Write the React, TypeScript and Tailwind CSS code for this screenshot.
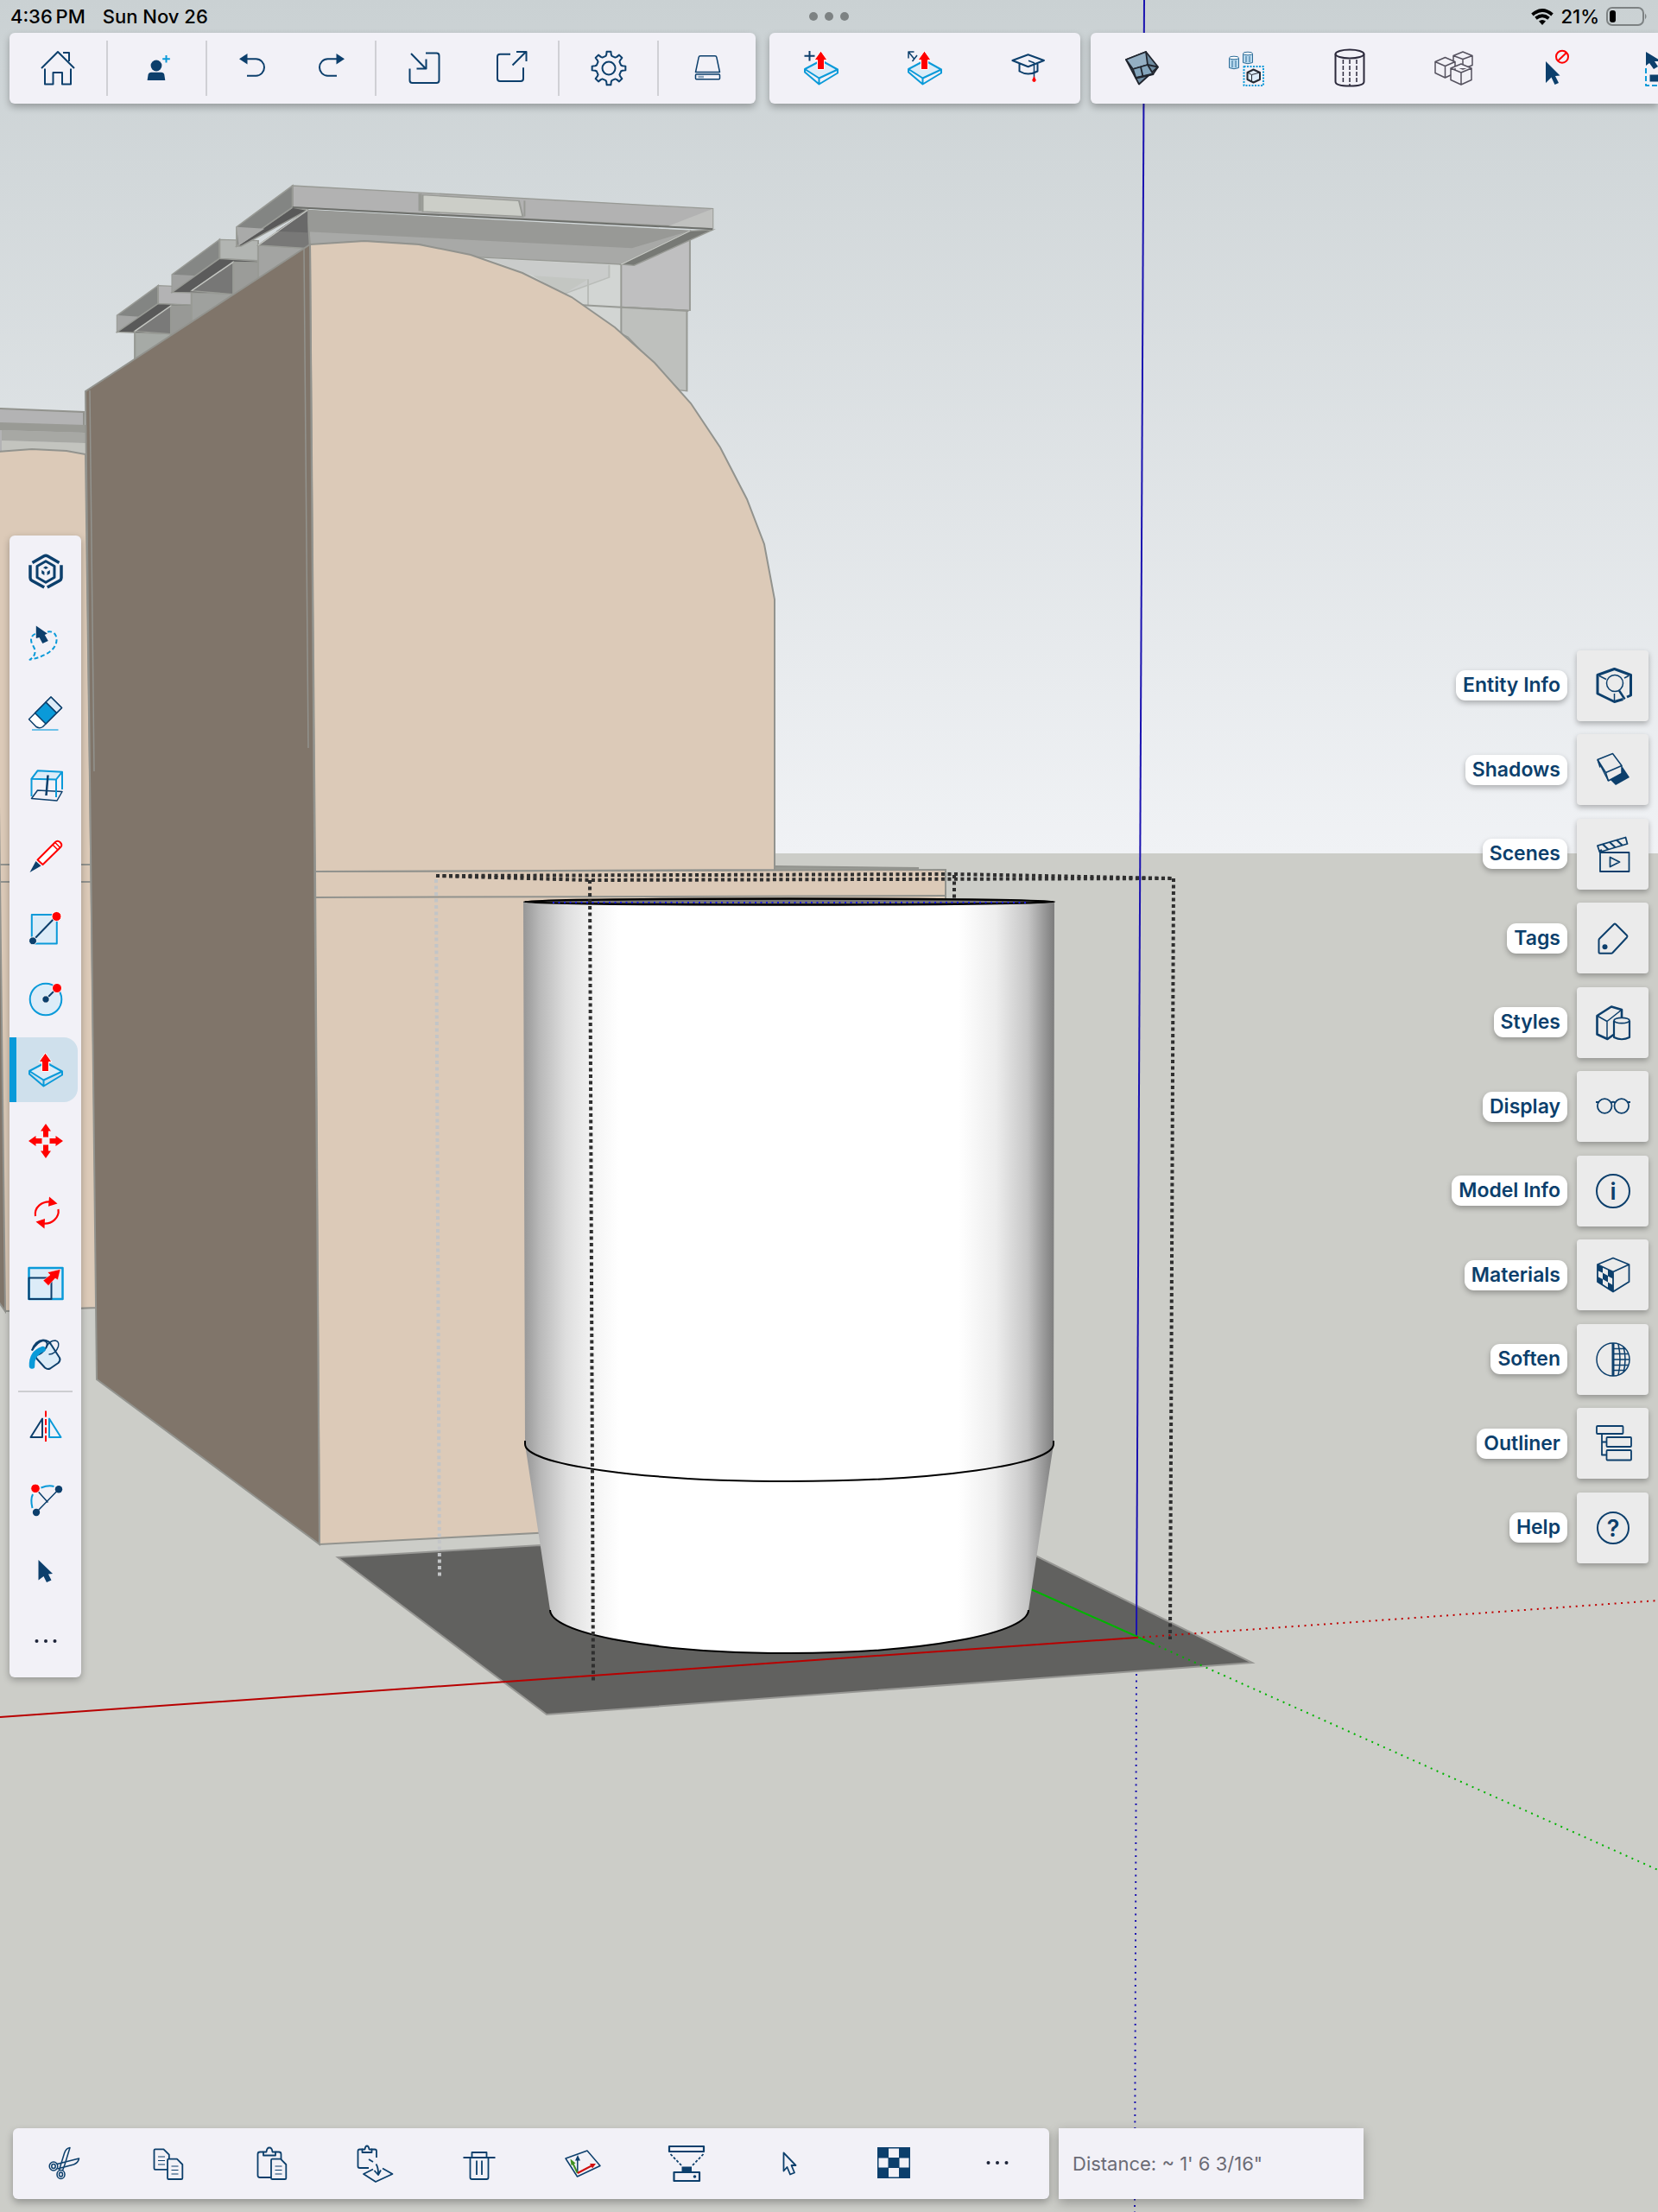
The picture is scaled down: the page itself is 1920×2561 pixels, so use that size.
import { useState } from 'react';
import type { ReactNode } from 'react';

const NAVY = '#0c3f6c';
const BLUE = '#0a9ad9';
const PALE = '#dcecf8';
const RED = '#ff0000';

function Icon({ children, w = 2 }: { children: ReactNode; w?: number }) {
  return (
    <svg
      viewBox="0 0 40 40"
      className="size-10 shrink-0 overflow-visible"
      fill="none"
      stroke={NAVY}
      strokeWidth={w}
      strokeLinejoin="round"
      aria-hidden="true"
    >
      {children}
    </svg>
  );
}

function gearPath() {
  const pts: string[] = [];
  for (let i = 0; i < 8; i++) {
    const mid = i * 45 - 90;
    const steps = [
      [-14, 14.5],
      [-10, 16],
      [-7, 19.5],
      [7, 19.5],
      [10, 16],
      [14, 14.5],
    ];
    for (const [d, r] of steps) {
      const a = ((mid + d) * Math.PI) / 180;
      pts.push(`${(20 + r * Math.cos(a)).toFixed(2)} ${(20 + r * Math.sin(a)).toFixed(2)}`);
    }
  }
  return `M${pts.join('L')}Z`;
}

const Slab = () => (
  <>
    <path d="M1 21L20 11 39 21.5 17.5 31.5Z" fill={PALE} stroke={BLUE} />
    <path d="M1 21v3.5l16.5 14L39 25.5v-4M17.5 31.5v7" stroke={BLUE} />
    <path d="M19.5 0L27 10.5H23.5V21.5H15.5V10.5H12z" fill={RED} stroke="#fff" strokeWidth="1" />
  </>
);

const HomeIcon = () => (
  <Icon>
    <path d="M1 20L20 1 39 20M26 2h7v10M5 20.5V38.5H14.5V25H25V38.5H35V20.5" />
  </Icon>
);

const UserIcon = () => (
  <Icon>
    <circle cx="19" cy="17" r="6.4" fill={NAVY} stroke="none" />
    <path d="M8.6 34l1-6.5q.6-2.8 3.6-2.8h11.5q3 0 3.6 2.8l1 6.5z" fill={NAVY} stroke="none" />
    <path d="M30.5 5v8.5M26.2 9.3h8.6" stroke={BLUE} />
  </Icon>
);

const UndoIcon = () => (
  <Icon>
    <path d="M6 9.3L15.5 3V15.5z" fill={NAVY} stroke="none" />
    <path d="M15 9.3h10.5a9.5 9.7 0 0 1 0 19.4H15" />
  </Icon>
);

const RedoIcon = () => (
  <Icon>
    <path d="M35 9.3L25.5 3V15.5z" fill={NAVY} stroke="none" />
    <path d="M26 9.3H15.5a9.5 9.7 0 0 0 0 19.4H26" />
  </Icon>
);

const ImportIcon = () => (
  <Icon>
    <path d="M22 2.5H34.5a3 3 0 0 1 3 3V34a3 3 0 0 1-3 3H6.5a3 3 0 0 1-3-3V20.5M5 3L22 20.5M22.5 9.5v11H11.5" />
  </Icon>
);

const ExportIcon = () => (
  <Icon>
    <path d="M19 3.7H7a3 3 0 0 0-3 3V32a3 3 0 0 0 3 3H31a3 3 0 0 0 3-3V19.3M21.5 16.5L37 1M26 1H37.5V12" />
  </Icon>
);

const GearIcon = () => (
  <Icon>
    <path d={gearPath()} />
    <circle cx="20" cy="20" r="7.5" />
  </Icon>
);

const DriveIcon = () => (
  <Icon w={1.5}>
    <path d="M12 5.7H29q1.5 0 1.8 1.5L34.5 24.5H6.5L10.2 7.2q.3-1.5 1.8-1.5z" />
    <rect x="6.5" y="27" width="28" height="5.8" rx="1" />
    <path d="M9.5 30h6.5" stroke="#8aa3bb" strokeWidth="2.5" />
  </Icon>
);

const PushPullIcon = () => (
  <Icon>
    <Slab />
  </Icon>
);

const PushPullAddIcon = () => (
  <Icon>
    <Slab />
    <path d="M6.5 0v11.5M.5 5.7h12" />
  </Icon>
);

const PushPullStretchIcon = () => (
  <Icon>
    <Slab />
    <path d="M1 8.5V1h6.5M1 1l6.5 8M5.5 12l5.5-7" strokeWidth="1.5" />
  </Icon>
);

const LearnIcon = () => (
  <Icon>
    <path d="M1.4 11L19.6 4.3 38 11 19.6 18.3ZM9.5 15v8.5q10 6 21 0V15" />
    <path d="M20 11.3l6.5 2.5V31" strokeWidth="1.5" />
    <path d="M26.5 29l2.2 4.5a2.2 2.4 0 0 1-4.4 0z" fill={RED} stroke="none" />
  </Icon>
);

const ShadedBoxIcon = () => (
  <Icon w={1.8}>
    <g stroke="#20252e">
      <path d="M1 10L24 1 38 18.5 16 38.5Z" fill="#6f8ca1" />
      <path d="M1 10L24 1l2 15L9 21z" fill="#94afc3" />
      <path d="M9 21l17-5 6.5 11-20 4.5z" fill="#84a5bc" />
      <path d="M26 16l12 2.5M12.5 31L32.5 26.5 38 18.5M18 18.5l2.5 11" />
    </g>
  </Icon>
);

const InstancesIcon = () => (
  <Icon w={1.5}>
    <g stroke="#2d6c98" fill="#b8d9ee" strokeWidth="1">
      <path d="M.5 8v11.5q5.5 2.5 11 0V8" />
      <ellipse cx="6" cy="8" rx="5.5" ry="1.8" fill="#fff" />
      <path d="M16.5 3v10.5q5.5 2.5 11 0V3" />
      <ellipse cx="22" cy="3" rx="5.5" ry="1.8" fill="#fff" />
      <path d="M4 11v8M8 11v8M20 6v7M24 6v7" />
    </g>
    <rect x="17.5" y="18" width="22.5" height="22" stroke={BLUE} strokeWidth="2" strokeDasharray="2 1.5" />
    <path d="M28.5 21.5l7.5 3.5v8l-7.5 3.5L21.5 33v-8z" fill={PALE} stroke="#252a33" strokeWidth="2" />
    <path d="M21.5 25l5 2.5 9.5-2.5M26.5 27.5V36" stroke="#252a33" strokeWidth="1" />
  </Icon>
);

const CylinderIcon = () => (
  <Icon>
    <g stroke="#2c2a3c">
      <ellipse cx="20" cy="3.5" rx="16.5" ry="5" />
      <path d="M3.5 3.5V35.5q0 5 16.5 5t16.5-5V3.5" />
      <path d="M12.4 10V38M20 10V40M28 10V38" strokeWidth="1.5" strokeDasharray="5 2" />
    </g>
  </Icon>
);

const CubesIcon = () => (
  <Icon w={1.5}>
    <g stroke="#55525f" fill="#f2f1f7">
      <path d="M31 1l11 4.5v11L31 21 20 16.5v-11zM20 5.5L31 9.5 42 5.5M31 9.5V21" />
      <path d="M10.5 7.5l11.5 5v13L10.5 31-1 25.5v-13zM-1 12.5l11.5 5 11.5-5M10.5 17.5V31" />
      <path d="M29 15l12 5v13.5L29 39l-12-5.5V20zM17 20l12 5 12-5M29 25V39" />
    </g>
  </Icon>
);

const DeselectIcon = () => (
  <Icon>
    <path d="M7 12L23.5 28.5 18 29l4 8-4.5 2-4-8.5L7 37z" fill={NAVY} stroke="none" />
    <circle cx="26" cy="6.7" r="7" stroke={RED} />
    <path d="M21 11.5L31 2" stroke={RED} />
  </Icon>
);

const SelectInnerIcon = () => (
  <Icon>
    <path d="M3 1v16l4-3 5 7 5-3-4-6h8z" fill={NAVY} stroke="none" />
    <path d="M3 20v20h30" stroke={BLUE} strokeDasharray="6 3" />
    <rect x="7.5" y="27.5" width="16" height="8" fill={NAVY} stroke="none" />
  </Icon>
);

const LogoIcon = () => (
  <Icon w={3.5}>
    <path d="M4.5 10.5L17.5 3q2.5-1.4 5 0L35.5 10.5M2 13.3V28q0 2 2 3.2L18.2 39M38 13.3V28q0 2-2 3.2L21.8 39" />
    <path d="M20 8.8l10 5.7v13L20 33.2 10 27.5v-13z" strokeWidth="3" />
    <path d="M20 14.5l3 1.7-3 1.7-3-1.7zM15.2 19l3.2 2v4l-3.2-2zM24.8 19l-3.2 2v4l3.2-2z" fill={NAVY} stroke="none" />
  </Icon>
);

const LassoIcon = () => (
  <Icon>
    <path d="M22 7.5C29 6 33 11 32.5 17.5 32 28 20 36 1.5 39.8 9 35 8.5 29 5.5 24 1 17 3 11 9 9.5" stroke={BLUE} strokeDasharray="5 3" />
    <path d="M8.8 .5L21.8 9.5l-3 1.5 4 7-6.5 3-3.8-7-3.7 1z" fill={NAVY} stroke="none" />
  </Icon>
);

const EraserIcon = () => (
  <Icon w={1.5}>
    <path d="M26 1L38.5 13.5 16.5 35.5q-3.5 2.5-7.5 0L.5 26.7z" fill="#fff" />
    <path d="M26 1L38.5 13.5 32.5 19.5 20 7z" fill={PALE} />
    <path d="M20 7L32.5 19.5 20 32 7.5 19.5z" fill={BLUE} />
    <path d="M4 39H34.5" stroke="#3fb1e3" />
  </Icon>
);

const SectionIcon = () => (
  <Icon>
    <path d="M3.5 35.5L10.5 26 39 27.5 33 38z" strokeWidth="1.5" />
    <path d="M3.5 12.7L10.5 3.3 39 4.7 32 13.5z" fill={PALE} stroke={BLUE} />
    <path d="M3.5 12.7V33M32 13.5V34M39 4.7V25" stroke={BLUE} />
    <path d="M22.5 8.5L20.5 32" strokeWidth="2.5" />
  </Icon>
);

const PencilIcon = () => (
  <Icon>
    <path d="M1.5 39L8.5 26l6 5.5z" fill={NAVY} stroke="none" />
    <path d="M10.5 24.5L31 4q2.5-2.5 5.5 0 3 3 1 5.5L16.5 30z" fill="#fff" stroke={RED} />
    <path d="M28 7l6 6M30.8 4.5l6 6" stroke={RED} strokeWidth="1.5" />
  </Icon>
);

const RectIcon = () => (
  <Icon>
    <rect x="3.8" y="5" width="29" height="33.5" fill={PALE} stroke={BLUE} />
    <path d="M5 35L32 7" />
    <circle cx="32.5" cy="7" r="5.5" fill={RED} stroke="#fff" strokeWidth="1" />
    <circle cx="5" cy="35.3" r="4.5" fill={NAVY} stroke="#fff" strokeWidth="1" />
  </Icon>
);

const CircleIcon = () => (
  <Icon>
    <circle cx="20" cy="21" r="18.3" fill={PALE} stroke={BLUE} />
    <path d="M20 21L32 9" />
    <circle cx="20" cy="21" r="4.2" fill={NAVY} stroke="#fff" strokeWidth="1" />
    <circle cx="33" cy="8" r="5.5" fill={RED} stroke="#fff" strokeWidth="1" />
  </Icon>
);

const MoveIcon = () => (
  <Icon>
    <g fill={RED} stroke="none">
      {[0, 90, 180, 270].map((deg) => (
        <path key={deg} d="M20 0l6 8.5h-3V15.5H17V8.5h-3z" transform={`rotate(${deg} 20 20)`} />
      ))}
    </g>
  </Icon>
);

const RotateIcon = () => (
  <Icon w={2.2}>
    <g stroke={RED}>
      <path d="M8 24C6.5 14 15 6.5 26 7.5" />
      <path d="M34.5 16C36 26 27 33.5 17 32.5" />
      <path d="M24 1.5L33.5 9.5 23 12.8zM18.5 38.5L8.5 30.5 19 27z" fill={RED} stroke="none" />
    </g>
  </Icon>
);

const ScaleIcon = () => (
  <Icon>
    <rect x=".5" y="2" width="39" height="36" fill={PALE} stroke={BLUE} strokeWidth="2.5" />
    <path d="M.5 13.5H26.5V38H.5z" />
    <path d="M37 3.5L34 16l-3-2-8 8.5-6-6 8-6.5-3-3z" fill={RED} stroke="#fff" strokeWidth=".5" />
  </Icon>
);

const PaintIcon = () => (
  <Icon>
    <path d="M7.5 22L26 4.5 36.5 24q.5 2-1.5 4.5L25 35.5q-3 1.5-6-1z" fill={PALE} stroke="none" />
    <path d="M9.5 20q-2 2 0 4L19 34.5q3 2.5 6 1L34.5 29q3-3 1.5-6L26 7.5Q24 3 17 2.5 8 3 4 14.5" />
    <path d="M4 14.5q6-10 13-11.5 7 1 3.5 8Q16 18.5 9.5 20" />
    <path d="M20.5 11Q24 3 31 3q5 1 3.5 7-3 9-11 9" strokeWidth="1.5" />
    <path d="M4 32.5Q3.5 17.5 16.5 13" stroke={BLUE} strokeWidth="6.5" strokeLinecap="round" />
  </Icon>
);

const FlipIcon = () => (
  <Icon>
    <path d="M2.5 31L16 9.5V31z" />
    <path d="M37.5 31L24 9.5V31z" stroke={BLUE} />
    <path d="M20 .5V36" stroke={RED} strokeDasharray="7 2.5" />
  </Icon>
);

const ArcIcon = () => (
  <Icon>
    <path d="M14.5 6.5q9-3.5 15-1.5M5 14q-3 6-.5 16" stroke={BLUE} />
    <path d="M8 7.3L22.5 23.5M35 8.2L9 35" strokeWidth="1.5" />
    <circle cx="8" cy="7.3" r="5.3" fill={RED} stroke="#fff" strokeWidth="1" />
    <circle cx="35" cy="8.2" r="4.2" fill={NAVY} stroke="none" />
    <circle cx="9" cy="35" r="4.2" fill={NAVY} stroke="none" />
  </Icon>
);

const CursorIcon = () => (
  <Icon>
    <path d="M11.5 8L28 24l-5 .5 3.5 7L21 34l-3.5-7-6 4.5z" fill={NAVY} stroke="none" />
  </Icon>
);

const DotsIcon = () => (
  <Icon>
    <g fill="#1d2438" stroke="none">
      <circle cx="9.5" cy="19" r="2" />
      <circle cx="20" cy="19" r="2" />
      <circle cx="30.5" cy="19" r="2" />
    </g>
  </Icon>
);

const EntityIcon = () => (
  <Icon>
    <path d="M31.5 35.5L21.5 38.5 2 29V7.5L21.5 .5 40.5 7.5V31l-4.5 2" strokeWidth="3" />
    <circle cx="22" cy="17" r="9.5" fill="#ebebeb" strokeWidth="1.5" />
    <path d="M27 25.5L33.5 35.5" strokeWidth="2.5" />
    <path d="M4 8.5l8 4M38 8.5l-5 2.5M21.5 29v8" strokeWidth="1.5" />
  </Icon>
);

const ShadowsIcon = () => (
  <Icon w={1.5}>
    <path d="M16 31L23 38 39 29 31 17z" fill={NAVY} stroke="none" />
    <path d="M2 8.5L19.5 1.5 30 15.5V24.5L14.5 33z" fill="#ebebeb" />
    <path d="M2 8.5l9.5 15L30 15.5M11.5 23.5l3 9.5M2 8.5l3 9" />
  </Icon>
);

const ScenesIcon = () => (
  <Icon w={1.8}>
    <path d="M2 10.2L34.5 .5 36.5 8 4.5 17.5z" />
    <path d="M8 8.5l6.5 6M16 6l6.5 6M24 3.5l6.5 6M4 17l3-2" strokeWidth="2.2" />
    <path d="M5 18H38.5V40H5zM16.5 23.5L27.5 29 16.5 34.5z" />
  </Icon>
);

const TagsIcon = () => (
  <Icon>
    <path d="M21 4q1-1 2 0L36 17q1 1 0 2.2L19.5 37q-.7.7-1.5.7H5q-1.5 0-1.5-1.5V22.5q0-1 .7-1.7z" />
    <circle cx="10.5" cy="30.2" r="3" fill={NAVY} stroke="none" />
  </Icon>
);

const StylesIcon = () => (
  <Icon w={2.6}>
    <path d="M20.5 34L13.5 39 1.5 33.5V12L18 1.5 30 5V15" />
    <path d="M1.5 12l11.5 6.5L30 5M13 18.5V38" strokeWidth="1.5" />
    <path d="M21 18V37q9 4.5 18 0V18" fill="#ebebeb" strokeWidth="2.2" />
    <ellipse cx="30" cy="17.5" rx="9" ry="3.2" fill="#ebebeb" strokeWidth="1.8" />
  </Icon>
);

const DisplayIcon = () => (
  <Icon w={1.8}>
    <circle cx="10.2" cy="19.5" r="8.3" />
    <circle cx="29.8" cy="19.5" r="8.3" />
    <path d="M0 15h3.5M36.5 15H40M17.5 15.5q2.5-1.5 5 0" />
  </Icon>
);

const IconLetter = ({ children }: { children: string }) => (
  <text x="20" y="30" textAnchor="middle" fontFamily="Inter, sans-serif" fontSize="27" fontWeight="600" fill={NAVY} stroke="none">
    {children}
  </text>
);

const InfoIcon = () => (
  <Icon>
    <circle cx="20" cy="20" r="19" />
    <IconLetter>i</IconLetter>
  </Icon>
);

const HelpIcon = () => (
  <Icon>
    <circle cx="20" cy="20" r="18" />
    <IconLetter>?</IconLetter>
  </Icon>
);

const MaterialsIcon = () => (
  <Icon w={1.8}>
    <path
      d="M2 8l6 2.8v7L2 15zM14 13.7l6 2.8v8l-6-3zM8 17.8l6 3.2v7.5l-6-3.5zM2 22l6 3v7l-6-3.5zM14 28.5l6 3.5v8l-6-3.8z"
      fill={NAVY}
      stroke="none"
    />
    <path d="M20 .5L38.5 8V28L20 39.5 2 28V8zM2 8l18 8.5L38.5 8M20 16.5v23" />
  </Icon>
);

const SoftenIcon = () => (
  <Icon w={1.5}>
    <circle cx="20" cy="20" r="19" />
    <path d="M20 1V39" strokeWidth="3" />
    <path d="M26 2q4 18 0 36M32 5q4 15 0 30M20 7.5H34M20 13.5H38M20 20H39M20 26.5H38M20 32.5H34" />
  </Icon>
);

const OutlinerIcon = () => (
  <Icon w={1.8}>
    <rect x="1" y="0" width="30.5" height="9" rx="1" />
    <rect x="12.5" y="13" width="28.5" height="11" rx="1" />
    <rect x="12.5" y="28" width="28.5" height="11.5" rx="1" />
    <path d="M7 9V33.5h5.5M7 18.5h5.5" />
  </Icon>
);

const CutIcon = () => (
  <Icon w={1.5}>
    <ellipse cx="7" cy="23" rx="4.8" ry="5" />
    <ellipse cx="15.5" cy="32.5" rx="4.5" ry="5" />
    <ellipse cx="7" cy="23" rx="2.2" ry="2.5" />
    <ellipse cx="15.5" cy="32.5" rx="2" ry="2.5" />
    <path d="M11 20.5L36.5 14q-1 5-6 7L11.5 26M13.5 27.5L19.5 8q2-6 6.5-6.5L20 21 17.5 28" />
  </Icon>
);

const Sheet = () => (
  <>
    <path d="M19 16q0-1.3 1.3-1.3H30l6.3 6.3V36.7q0 1.3-1.3 1.3H20.3Q19 38 19 36.7z" fill="#f2f1f7" />
    <path d="M23.5 23h8M23.5 27.5h8M23.5 32h8" strokeWidth="1.2" />
  </>
);

const CopyIcon = () => (
  <Icon w={1.8}>
    <path d="M3.5 4.6q0-1.3 1.3-1.3H14.5l6.3 6.3V25.5q0 1.3-1.3 1.3H4.8q-1.3 0-1.3-1.3z" />
    <path d="M8 12h8M8 16.5h8M8 21h8" strokeWidth="1.2" />
    <Sheet />
  </Icon>
);

const PasteIcon = () => (
  <Icon w={1.8}>
    <path d="M10 6.5H6q-2.5 0-2.5 2.5V33.5Q3.5 36 6 36H28q2.5 0 2.5-2.5V9q0-2.5-2.5-2.5H24" />
    <path d="M10 10.5V6.5h3.5q.5-5 3.5-5t3.5 5H24v4z" />
    <Sheet />
  </Icon>
);

const PasteInPlaceIcon = () => (
  <Icon w={1.8}>
    <path d="M5 3.5H1.5Q-.5 3.5-.5 5.5V23q0 2 2 2H12M15 3.5h4q2 0 2 2V13" />
    <path d="M4.5 7V3.5H7.5Q8-.5 10-.5t2.5 4h3V7z" />
    <path d="M17 26.5L6 32 20 41 39.5 32 28 25.5" />
    <path d="M12 15l5 3M20.5 20.5q2.5 3.5 2.5 11M18.5 28l4.5 5 3-5.5" />
  </Icon>
);

const TrashIcon = () => (
  <Icon w={1.8}>
    <path d="M1.5 13H38.5M11.5 13V7H28.5V13M9.5 13V36q0 2 2 2H28.5q2 0 2-2V13M17 16.5V33M23 16.5V33" />
  </Icon>
);

const AxesIcon = () => (
  <Icon w={1.5}>
    <path d="M0 14L25 5 40 22.5 13.5 35z" />
    <path d="M13.8 31V15" />
    <path d="M14 10l3 6.5H11z" fill={NAVY} stroke="none" />
    <path d="M13.8 31L8 19" stroke="#3f8f1f" strokeWidth="2" />
    <path d="M5.5 14.5l6 5-5 2.5z" fill="#3f8f1f" stroke="none" />
    <path d="M13.8 31L30 22.5" stroke="#d00f0f" strokeWidth="2" />
    <path d="M35 20l-4 5.5-3-5.5z" fill="#d00f0f" stroke="none" />
  </Icon>
);

const ProjectorIcon = () => (
  <Icon w={2.2}>
    <rect x="0" y="0" width="40" height="6" />
    <path d="M1.5 9L15 23M39.5 9L26 23" strokeWidth="1.8" strokeDasharray="3 2" />
    <rect x="14.5" y="23.5" width="11.5" height="6.5" fill={NAVY} stroke="none" />
    <rect x="5.5" y="30" width="29.5" height="10" />
    <circle cx="29.5" cy="35" r="1.8" fill={NAVY} stroke="none" />
  </Icon>
);

const PointerIcon = () => (
  <Icon w={1.8}>
    <path d="M12.5 7.5L26.5 22h-5l3.5 8.5-5 2-3.5-8.5-4 4.5z" />
  </Icon>
);

const CheckerIcon = () => (
  <Icon>
    <rect x="1" y="1" width="38" height="36" fill={NAVY} stroke="none" />
    <path d="M14 2.5H26V13H14zM2.5 13.5H13.5V24.5H2.5zM26.5 13.5H37.5V24.5H26.5zM14 25H26V35.5H14z" fill="#f2f1f7" stroke="none" />
  </Icon>
);

type Tool = { name: string; icon: () => ReactNode };

const fileGroups: { width: string; tools: Tool[] }[] = [
  { width: 'w-[104px]', tools: [{ name: 'Home', icon: HomeIcon }] },
  { width: 'w-[105px]', tools: [{ name: 'Invite', icon: UserIcon }] },
  {
    width: 'w-[93px]',
    tools: [
      { name: 'Undo', icon: UndoIcon },
      { name: 'Redo', icon: RedoIcon },
    ],
  },
  {
    width: 'w-[101px]',
    tools: [
      { name: 'Import', icon: ImportIcon },
      { name: 'Export', icon: ExportIcon },
    ],
  },
  { width: 'w-[105px]', tools: [{ name: 'Settings', icon: GearIcon }] },
  { width: 'w-[104px]', tools: [{ name: 'Storage', icon: DriveIcon }] },
];

const modifiers: Tool[] = [
  { name: 'New face', icon: PushPullAddIcon },
  { name: 'Stretch', icon: PushPullStretchIcon },
  { name: 'Learn', icon: LearnIcon },
];

const actions: Tool[] = [
  { name: 'Shaded', icon: ShadedBoxIcon },
  { name: 'Instances', icon: InstancesIcon },
  { name: 'Hidden geometry', icon: CylinderIcon },
  { name: 'Components', icon: CubesIcon },
  { name: 'Deselect', icon: DeselectIcon },
  { name: 'Select inside', icon: SelectInnerIcon },
];

const drawTools: Tool[] = [
  { name: 'All tools', icon: LogoIcon },
  { name: 'Lasso', icon: LassoIcon },
  { name: 'Eraser', icon: EraserIcon },
  { name: 'Section', icon: SectionIcon },
  { name: 'Line', icon: PencilIcon },
  { name: 'Rectangle', icon: RectIcon },
  { name: 'Circle', icon: CircleIcon },
  { name: 'Push/Pull', icon: PushPullIcon },
  { name: 'Move', icon: MoveIcon },
  { name: 'Rotate', icon: RotateIcon },
  { name: 'Scale', icon: ScaleIcon },
  { name: 'Paint', icon: PaintIcon },
];

const extraTools: Tool[] = [
  { name: 'Flip', icon: FlipIcon },
  { name: 'Arc', icon: ArcIcon },
  { name: 'Select', icon: CursorIcon },
  { name: 'More tools', icon: DotsIcon },
];

const panels: Tool[] = [
  { name: 'Entity Info', icon: EntityIcon },
  { name: 'Shadows', icon: ShadowsIcon },
  { name: 'Scenes', icon: ScenesIcon },
  { name: 'Tags', icon: TagsIcon },
  { name: 'Styles', icon: StylesIcon },
  { name: 'Display', icon: DisplayIcon },
  { name: 'Model Info', icon: InfoIcon },
  { name: 'Materials', icon: MaterialsIcon },
  { name: 'Soften', icon: SoftenIcon },
  { name: 'Outliner', icon: OutlinerIcon },
  { name: 'Help', icon: HelpIcon },
];

const editTools: Tool[] = [
  { name: 'Cut', icon: CutIcon },
  { name: 'Copy', icon: CopyIcon },
  { name: 'Paste', icon: PasteIcon },
  { name: 'Paste in place', icon: PasteInPlaceIcon },
  { name: 'Delete', icon: TrashIcon },
  { name: 'Axes', icon: AxesIcon },
  { name: 'Project', icon: ProjectorIcon },
  { name: 'Pointer', icon: PointerIcon },
  { name: 'Texture', icon: CheckerIcon },
  { name: 'More actions', icon: DotsIcon },
];

function Scene() {
  return (
    <svg
      viewBox="0 0 1920 2561"
      preserveAspectRatio="xMidYMid slice"
      className="absolute inset-0 h-full w-full"
      aria-hidden="true"
    >
      <defs>
        <linearGradient id="sky" x1="0" y1="0" x2="0" y2="1">
          <stop offset="0" stopColor="#cad1d3" />
          <stop offset="1" stopColor="#f0f2f5" />
        </linearGradient>
        <linearGradient id="drum" x1="0" y1="0" x2="1" y2="0">
          <stop offset="0" stopColor="#969696" />
          <stop offset=".03" stopColor="#b8b8b8" />
          <stop offset=".08" stopColor="#dedede" />
          <stop offset=".14" stopColor="#f6f6f6" />
          <stop offset=".18" stopColor="#ffffff" />
          <stop offset=".82" stopColor="#ffffff" />
          <stop offset=".89" stopColor="#ededed" />
          <stop offset=".95" stopColor="#c6c6c6" />
          <stop offset="1" stopColor="#7c7c7c" />
        </linearGradient>
      </defs>

      <rect width="1920" height="988" fill="url(#sky)" />
      <rect y="988" width="1920" height="1573" fill="#cccdc8" />

      {/* neighbouring building */}
      <g stroke="#92938e" strokeWidth="2">
        <path d="M-2 473L97 477V490L99 530H-2z" fill="#b3b3b4" />
        <path d="M0 489L99 492V501L0 498z" fill="#999a95" stroke="none" />
        <path d="M2 498L99 501V513L2 510z" fill="#a7a8a4" stroke="none" />
        <path d="M2 510L99 513V530H2z" fill="#c3c4bf" stroke="none" />
        <path d="M-2 523L37 520 77 522 99 526 112 1514 7 1518-2 1505z" fill="#dccab8" />
        <path d="M-1 934L6 1518-1 1508z" fill="#80756a" />
        <path d="M0 1001H106M0 1021H106" />
      </g>

      {/* glass monitors along the roof, front one last */}
      <g transform="translate(90 190) scale(.4975 .3333)" stroke="#989a95" strokeWidth="4">
        <path d="M133 583L217 590V600L133 677z" fill="#a6aaa6" />
        <path d="M187 422L265 427V490L187 485z" fill="#b3b3b4" />
        <path d="M187 422L92 525V583L187 485z" fill="#838583" />
        <path d="M92 525L145 530 92 583z" fill="#a5a6a5" stroke="none" />
        <path d="M187 485L325 492 217 600V590L92 583z" fill="#595959" />
        <path d="M217 492H325L217 600z" fill="#989996" />
        <path d="M217 492L133 580 217 590z" fill="#7a7a79" />
        <path d="M133 580V677" fill="none" />

        <path d="M265 445L362 452 265 552z" fill="#9fa19e" />
        <path d="M330 262L420 266V335L330 328z" fill="#b2b5b2" />
        <path d="M330 262L220 383V445L330 328z" fill="#858785" />
        <path d="M220 383L278 388 220 445z" fill="#a0a1a0" stroke="none" />
        <path d="M330 328L480 343 362 455V450L220 445z" fill="#5b5b5b" />
        <path d="M362 340L478 343 362 457z" fill="#9b9c99" />
        <path d="M362 340L265 440 362 452z" fill="#777776" />

        <path d="M420 282L535 292 420 402z" fill="#a3a4a2" />
        <path d="M925 320L1267 348V600L1150 463z" fill="#d2d5d3" stroke="none" />
        <path d="M950 328L1237 350V393L1130 450 1060 388z" fill="#cacccb" stroke="none" />
        <path d="M1060 388L1188 400 1130 452z" fill="#c3c6c2" stroke="none" />
        <path d="M1237 350V393L1130 452M1188 400V490" fill="none" stroke="#b9bcb8" />
        <path d="M1265 348L1425 232V508L1265 496z" fill="#bfbfc0" />
        <path d="M1265 496L1418 508V788L1400 785 1280 600 1265 590z" fill="#bec0bd" />
        <path d="M1175 490L1422 510" strokeWidth="6" />

        <path d="M535 160L1425 232 1265 348 915 322 795 278 668 267 540 280z" fill="#a8a9a7" />
        <path d="M535 160L1425 232 1290 292 535 235z" fill="#989996" stroke="none" />
        <path d="M1425 232L1478 228 1295 352 1265 348z" fill="#777975" />
        <path d="M500 150L535 160 380 285H370z" fill="#595959" />
        <path d="M535 160L420 282 530 292 540 280z" fill="#787877" />
        <path d="M535 160L462 233 535 238z" fill="#696969" stroke="none" />

        <path d="M500 75L1478 155V222L500 150z" fill="#b2b2b2" />
        <path d="M1478 155V222L1375 215z" fill="#c0c1bf" stroke="none" />
        <path d="M803 107L1027 127 1036 182 803 165z" fill="#cccec8" />
        <path d="M1040 127V182" />
        <path d="M797 103V163" strokeWidth="8" />
        <path d="M500 75L370 218V285L500 150z" fill="#838583" />
        <path d="M370 218L435 224 375 283z" fill="#a9aaa9" stroke="none" />
        <path d="M500 150L1478 226" stroke="#6d6f6b" strokeWidth="6" />
        <path d="M1425 232L1265 348M535 160L420 282M362 340L265 440M217 492L133 580" stroke="#c6c8c4" strokeWidth="3" />
      </g>

      {/* vaulted building */}
      <g stroke="#92938e" strokeWidth="2">
        <path d="M897 1003L1063 1005V1008H897z" fill="#999b95" />
        <path d="M365 1009L1095 1007V1080L640 1774 370 1788z" fill="#dccab8" />
        <path d="M359 283L422 279 485 283 545 295 605 316 662 344 712 379 758 420 800 467 834 518 865 578 885 630 897 694V1007L365 1009z" fill="#dccab8" />
        <path d="M365 1039L1095 1037" />
        <path d="M359 283L99 453 112 1597 370 1788z" fill="#80756a" />
        <path d="M104 452L109 893M352 288L357 866" strokeWidth="1.5" />
      </g>

      {/* ground shadow */}
      <path d="M391 1803L633 1985 1450 1925 1199 1801 626 1789z" fill="#61615f" stroke="#979794" strokeWidth="2" />

      {/* bounding box edges behind the drum */}
      <g fill="none" stroke="#2f2f2f" strokeWidth="4" strokeDasharray="4 3.5">
        <path d="M505 1014L1105 1012 1359 1017" />
        <path d="M505 1014L683 1019 1359 1017" />
        <path d="M1105 1013V1042" />
        <path d="M505 1018L509 1825" stroke="#c3c5c7" />
      </g>

      {/* axes */}
      <g fill="none" strokeWidth="2">
        <path d="M1325 0L1316 1895" stroke="#1a12b0" />
        <path d="M1194 1840L1335 1903" stroke="#00b400" />
        <path d="M1316 1938L1314 2561" stroke="#1a12b0" strokeDasharray="2 5.5" />
        <path d="M1316 1896L1920 1853" stroke="#c00000" strokeDasharray="2 5.5" />
        <path d="M1335 1903L1920 2165" stroke="#00b400" strokeDasharray="2 5.5" />
      </g>

      {/* drum */}
      <path d="M608 1672L637 1864A277 50 0 0 0 1191 1864L1220 1672z" fill="url(#drum)" />
      <path d="M606 1044L608 1672A306 43 0 0 0 1220 1672L1221 1044z" fill="url(#drum)" />
      <path d="M608 1668V1672A306 43 0 0 0 1220 1672V1668M637 1864A277 50 0 0 0 1191 1864" fill="none" stroke="#000" strokeWidth="2" />
      <ellipse cx="914" cy="1044" rx="307" ry="3.5" fill="#777" stroke="#000" strokeWidth="2.5" />
      <path d="M640 1045H1190" stroke="#1a1ae0" strokeWidth="2" strokeDasharray="2 4.5" />
      <path d="M0 1988L1316 1896" stroke="#b80000" strokeWidth="2" />
      <g fill="none" stroke="#2f2f2f" strokeWidth="4" strokeDasharray="4 3.5">
        <path d="M683 1019L687 1946" />
        <path d="M1359 1017L1355 1898" />
      </g>
    </svg>
  );
}

function ToolButton({ tool, className }: { tool: Tool; className: string }) {
  const Glyph = tool.icon;
  return (
    <button type="button" aria-label={tool.name} className={`flex items-center justify-center ${className}`}>
      <Glyph />
    </button>
  );
}

function StatusBar() {
  return (
    <header className="grid h-[38px] grid-cols-3 items-center px-3 text-[22px] font-medium text-black">
      <div className="flex gap-5 whitespace-nowrap">
        <span>4:36{'\u2009'}PM</span>
        <span>Sun Nov 26</span>
      </div>
      <div className="flex justify-center gap-2">
        <span className="size-[10px] rounded-full bg-[#7d8283]" />
        <span className="size-[10px] rounded-full bg-[#7d8283]" />
        <span className="size-[10px] rounded-full bg-[#7d8283]" />
      </div>
      <div className="flex items-center justify-end gap-2">
        <svg viewBox="0 0 26 19" className="h-[19px] w-[26px]" fill="none" stroke="#000" strokeWidth="3.8" aria-hidden="true">
          <path d="M1.5 7Q13-3 24.5 7" />
          <path d="M5.5 11.3q7.5-6 15 0" />
          <path d="M13 19l-4-4.5q4-3 8 0z" fill="#000" stroke="none" />
        </svg>
        <span>21%</span>
        <svg viewBox="0 0 48 22" className="h-[22px] w-12" aria-hidden="true">
          <rect x="1" y="1" width="42" height="20" rx="6" fill="none" stroke="#7d8283" strokeWidth="2" />
          <rect x="4" y="4" width="7" height="14" rx="3" fill="#000" />
          <path d="M45 7.5q3 3.5 0 7z" fill="#7d8283" />
        </svg>
      </div>
    </header>
  );
}

export default function App() {
  const [activeTool, setActiveTool] = useState('Push/Pull');
  const [distance, setDistance] = useState(`Distance: ~ 1' 6 3/16"`);

  return (
    <div className="relative flex min-h-screen flex-col overflow-hidden bg-[#cccdc8] font-['Inter',sans-serif]">
      <Scene />

      <div className="relative flex flex-1 flex-col">
        <StatusBar />

        <div className="flex h-[82px] pl-[11px]">
          <div className="mr-4 flex shrink-0 items-center divide-x-2 divide-[#d0d0d5] rounded-md bg-[#f2f1f7] shadow-[0_4px_8px_rgba(0,0,0,0.28)]">
            {fileGroups.map((group) => (
              <div key={group.tools[0].name} className="flex h-16 items-center px-1">
                {group.tools.map((tool) => (
                  <ToolButton key={tool.name} tool={tool} className={group.width} />
                ))}
              </div>
            ))}
          </div>
          <div className="mr-3 flex shrink-0 rounded-md bg-[#f2f1f7] shadow-[0_4px_8px_rgba(0,0,0,0.28)]">
            {modifiers.map((tool) => (
              <ToolButton key={tool.name} tool={tool} className="w-[120px]" />
            ))}
          </div>
          <div className="min-w-0 flex-1 rounded-l-md bg-[#f2f1f7] shadow-[0_4px_8px_rgba(0,0,0,0.28)]">
            <div className="flex h-full overflow-hidden">
              {actions.map((tool) => (
                <ToolButton key={tool.name} tool={tool} className="w-[120px] shrink-0" />
              ))}
            </div>
          </div>
        </div>

        <main className="flex flex-1 items-center justify-between px-[11px] pb-[22px]">
          <nav className="flex min-h-[1322px] w-[83px] flex-col rounded-md bg-[#f2f1f7] shadow-[0_3px_8px_rgba(0,0,0,0.28)]">
            {drawTools.map((tool) => {
              const Glyph = tool.icon;
              const active = tool.name === activeTool;
              return (
                <button
                  key={tool.name}
                  type="button"
                  aria-label={tool.name}
                  aria-pressed={active}
                  onClick={() => setActiveTool(tool.name)}
                  className="flex shrink-0 grow basis-[75px] items-center"
                >
                  <span
                    className={
                      active
                        ? 'mr-1 flex h-[75px] flex-1 items-center justify-center rounded-r-2xl border-l-8 border-[#0a9ad9] bg-[#cfe0ec] pr-1'
                        : 'flex h-[75px] flex-1 items-center justify-center'
                    }
                  >
                    <Glyph />
                  </span>
                </button>
              );
            })}
            <hr className="mx-[10px] border-t-2 border-[#cdcdd1]" />
            {extraTools.map((tool) => (
              <ToolButton key={tool.name} tool={tool} className="shrink-0 grow basis-[75px]" />
            ))}
          </nav>

          <aside className="flex min-h-[1057px] flex-col items-end justify-between">
            {panels.map((panel) => {
              const Glyph = panel.icon;
              return (
                <button key={panel.name} type="button" className="flex items-center gap-[11px]">
                  <span className="rounded-[11px] bg-white px-2 text-[23px] leading-[35px] font-semibold text-[#0c3f6c] shadow-[0_3px_6px_rgba(0,0,0,0.28)]">
                    {panel.name}
                  </span>
                  <span className="flex h-[82px] w-[83px] items-center justify-center rounded bg-[#ebebeb] shadow-[0_3px_6px_rgba(0,0,0,0.28)]">
                    <Glyph />
                  </span>
                </button>
              );
            })}
          </aside>
        </main>

        <footer className="flex h-[82px] shrink-0 gap-[11px] pl-[15px]">
          <div className="flex rounded-md bg-[#f2f1f7] shadow-[0_4px_8px_rgba(0,0,0,0.28)]">
            {editTools.map((tool) => (
              <ToolButton key={tool.name} tool={tool} className="w-[120px]" />
            ))}
          </div>
          <input
            type="text"
            aria-label="Distance"
            value={distance}
            onChange={(e) => setDistance(e.target.value)}
            className="w-[353px] bg-[#f2f1f7] px-4 text-[22px] text-[#6b6b75] shadow-[0_4px_12px_rgba(0,0,0,0.28)] outline-none"
          />
        </footer>
        <div className="h-[15px] shrink-0" />
      </div>
    </div>
  );
}
